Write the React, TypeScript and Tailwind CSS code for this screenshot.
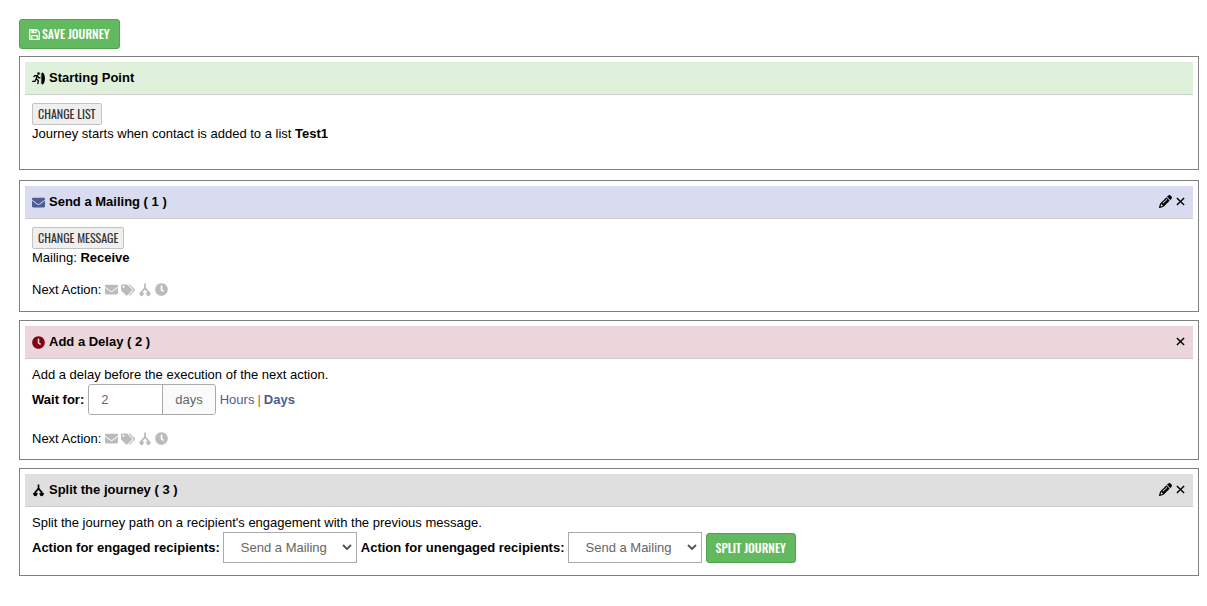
import React from "react";
import { FaEnvelope, FaTags, FaClock } from "react-icons/fa";
import { FaPencil } from "react-icons/fa6";

type IconProps = { className?: string };

function SplitIcon({ className }: IconProps) {
  return (
    <svg viewBox="0 0 14 14" className={className} aria-hidden="true">
      <g fill="none" stroke="currentColor" strokeWidth="1.8" strokeLinejoin="round">
        <path d="M7 0.6V6" />
        <path d="M3.6 11V8.8L7 5L10.4 8.8V11" />
      </g>
      <path d="M0.8 9.8H6.4L3.6 13.4ZM7.6 9.8H13.2L10.4 13.4Z" fill="currentColor" />
      <circle cx="3.6" cy="11" r="2" fill="currentColor" />
      <circle cx="10.4" cy="11" r="2" fill="currentColor" />
    </svg>
  );
}

function StartIcon({ className }: IconProps) {
  return (
    <svg viewBox="0 0 14 14" className={className} aria-hidden="true">
      <circle cx="7" cy="1.7" r="1.4" fill="currentColor" />
      <path
        d="M1.6 5.2L3.2 3.9H5.8L4.4 7.2L6.8 9.2L6.2 13M4.4 7.6L3.2 10.2H0.2M5.8 4.2L7.2 6.2H9"
        fill="none"
        stroke="currentColor"
        strokeWidth="1.4"
      />
      <path d="M9.6 1.6L10.4 0.8V13.2L9.6 12.4Z" fill="currentColor" />
      <path d="M10.8 0.2C15 1.6 15 12.4 10.8 13.8Z" fill="currentColor" />
    </svg>
  );
}

function SaveIcon({ className }: IconProps) {
  return (
    <svg viewBox="0 0 12 12" className={className} aria-hidden="true">
      <g fill="none" stroke="currentColor" strokeWidth="1.4" strokeLinejoin="round">
        <path d="M0.8 0.8H8.6L11.2 3.4V11.2H0.8Z" />
        <path d="M3 11V7.2H9V11" />
      </g>
      <path d="M2.6 0.8H8.2V4.6H2.6ZM5.8 1.6V3.6H7V1.6Z" fill="currentColor" fillRule="evenodd" />
    </svg>
  );
}

function CloseIcon({ className }: IconProps) {
  return (
    <svg viewBox="0 0 10 10" className={className} aria-hidden="true">
      <path d="M1 1L9 9M9 1L1 9" fill="none" stroke="currentColor" strokeWidth="1.6" />
    </svg>
  );
}

function Card({
  icon,
  title,
  headerClass,
  className,
  editable,
  closable,
  children,
}: {
  icon: React.ReactNode;
  title: string;
  headerClass: string;
  className: string;
  editable?: boolean;
  closable?: boolean;
  children: React.ReactNode;
}) {
  return (
    <section className={`border border-[#808080] p-[5px] ${className}`}>
      <header
        className={`flex items-center justify-between border-b border-[#cccccc] px-[7px] py-2 ${headerClass}`}
      >
        <h2 className="flex items-center gap-1 font-bold">
          {icon}
          {title}
        </h2>
        <div className="flex items-center gap-1 pr-px pb-px">
          {editable && (
            <button type="button" aria-label={`Edit ${title}`}>
              <FaPencil className="size-[13px]" />
            </button>
          )}
          {closable && (
            <button type="button" aria-label={`Remove ${title}`}>
              <CloseIcon className="size-[9px]" />
            </button>
          )}
        </div>
      </header>
      <div className="px-[7px] pt-2">{children}</div>
    </section>
  );
}

function SmallButton({ children }: { children: React.ReactNode }) {
  return (
    <button
      type="button"
      className="mb-px block h-[22px] rounded-[2px] border border-[#c3c3c3] bg-[#efefef] px-[5px] font-['Oswald','Liberation_Sans_Narrow',sans-serif] text-[12px] leading-5 text-[#333333]"
    >
      {children}
    </button>
  );
}

function GreenButton({ children }: { children: React.ReactNode }) {
  return (
    <button
      type="button"
      className="flex h-[30px] items-center gap-[2px] rounded-[3px] border border-[#51a351] bg-[#62b95f] px-[9px] font-['Oswald','Liberation_Sans_Narrow',sans-serif] text-[12px] font-medium text-white"
    >
      {children}
    </button>
  );
}

function NextAction() {
  return (
    <div className="flex items-center">
      <span className="mr-1">Next Action:</span>
      <div className="flex items-center gap-[3px] pb-px text-[#bbbbbb]">
        <button type="button" aria-label="Send a mailing">
          <FaEnvelope className="size-[13px]" />
        </button>
        <button type="button" aria-label="Tag contact">
          <FaTags className="size-[14px]" />
        </button>
        <button type="button" aria-label="Split the journey">
          <SplitIcon className="size-[14px]" />
        </button>
        <button type="button" aria-label="Add a delay">
          <FaClock className="size-[13px]" />
        </button>
      </div>
    </div>
  );
}

function ActionSelect({ id, label }: { id: string; label: string }) {
  return (
    <div className="flex items-center gap-[3px]">
      <label htmlFor={id} className="font-bold">
        {label}
      </label>
      <div className="relative">
        <select
          id={id}
          defaultValue="mailing"
          className="block h-[31px] w-[134px] appearance-none border border-[#aaaaaa] bg-white pl-[17px] text-[13px] text-[#666666]"
        >
          <option value="mailing">Send a Mailing</option>
          <option value="delay">Add a Delay</option>
        </select>
        <svg
          viewBox="0 0 10 6"
          className="pointer-events-none absolute top-3 right-[5px] h-[6px] w-[10px] text-[#555555]"
          aria-hidden="true"
        >
          <path d="M1 1L5 5L9 1" fill="none" stroke="currentColor" strokeWidth="1.9" />
        </svg>
      </div>
    </div>
  );
}

export default function App() {
  return (
    <main className="bg-white pt-[19px] pr-2 pb-8 pl-[19px] font-['Liberation_Sans',Arial,sans-serif] text-[13px] leading-4 text-black">
      <GreenButton>
        <SaveIcon className="size-[11px]" />
        SAVE JOURNEY
      </GreenButton>

      <Card
        className="mt-[7px] pb-[27px]"
        headerClass="bg-[#dff1da]"
        icon={<StartIcon className="size-[13px]" />}
        title="Starting Point"
      >
        <SmallButton>CHANGE LIST</SmallButton>
        <p>
          Journey starts when contact is added to a list <b>Test1</b>
        </p>
      </Card>

      <Card
        className="mt-[10px] pb-[13px]"
        headerClass="bg-[#d9dcef]"
        icon={<FaEnvelope className="size-[13px] text-[#4f5b93]" />}
        title="Send a Mailing ( 1 )"
        editable
        closable
      >
        <SmallButton>CHANGE MESSAGE</SmallButton>
        <p className="mb-4">
          Mailing: <b>Receive</b>
        </p>
        <NextAction />
      </Card>

      <Card
        className="mt-2 pb-[12px]"
        headerClass="bg-[#ebd6dc]"
        icon={<FaClock className="size-[13px] text-[#800010]" />}
        title="Add a Delay ( 2 )"
        closable
      >
        <p className="mb-px">Add a delay before the execution of the next action.</p>
        <div className="mb-4 flex items-center gap-1">
          <label htmlFor="wait" className="font-bold">
            Wait for:
          </label>
          <div className="flex h-[31px] items-stretch rounded-[3px] border border-[#aaaaaa] text-[#666666]">
            <input id="wait" defaultValue="2" className="w-[73px] rounded-l-[3px] bg-white px-3 text-[13px]" />
            <span className="flex items-center rounded-r-[3px] border-l border-[#aaaaaa] bg-[#fafafa] px-3">
              days
            </span>
          </div>
          <div className="flex gap-[3px] text-[#4f5b93]">
            <a href="#hours">Hours</a>
            <span className="text-[#a07020]">|</span>
            <a href="#days" className="font-bold">
              Days
            </a>
          </div>
        </div>
        <NextAction />
      </Card>

      <Card
        className="mt-2 pb-[12px]"
        headerClass="bg-[#dfdfdf]"
        icon={<SplitIcon className="size-[13px]" />}
        title="Split the journey ( 3 )"
        editable
        closable
      >
        <p className="mb-px">
          Split the journey path on a recipient's engagement with the previous message.
        </p>
        <div className="flex flex-wrap items-center gap-1">
          <ActionSelect id="engaged" label="Action for engaged recipients:" />
          <ActionSelect id="unengaged" label="Action for unengaged recipients:" />
          <GreenButton>SPLIT JOURNEY</GreenButton>
        </div>
      </Card>
    </main>
  );
}
